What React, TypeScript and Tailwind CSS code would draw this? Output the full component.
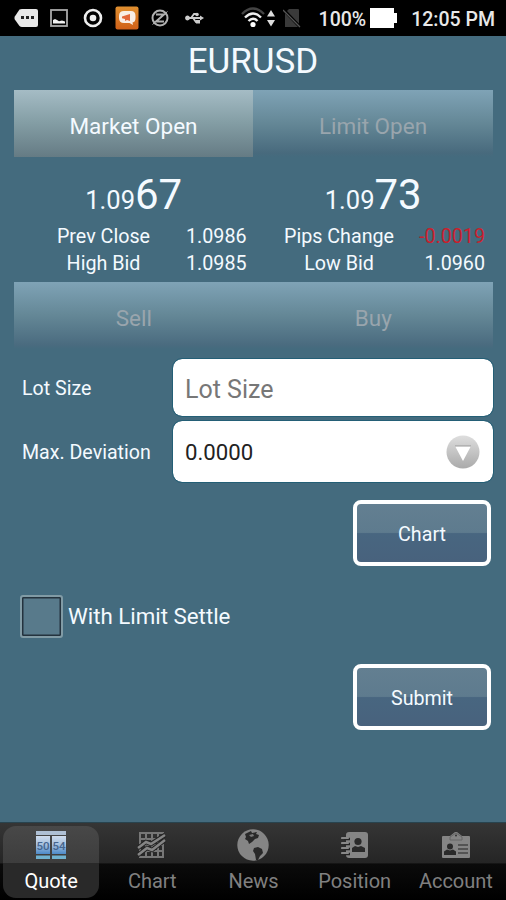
import React, { useState } from 'react';

interface Tab {
  name: string;
  icon: React.ReactNode;
}

const StatusBar: React.FC = () => (
  <div className="flex h-9 items-center bg-black pl-3.5 pr-[11px] text-[#e8e8e8]">
    <svg className="w-[25px] h-6 shrink-0" viewBox="0 0 25 24">
      <path d="M5.5 3.5Q6.500 3 8 3H22Q24 3 24 5V19Q24 21 22 21H8Q6.500 21 5.500 20L.8 13.500Q0 12 .8 10.500Z" fill="#e8e8e8" />
      <path d="M7 10h3v3H7zM12 10h3v3h-3zM17 10h3v3h-3z" fill="#222" />
    </svg>
    <svg className="ml-[11px] w-[18px] h-[18px] shrink-0" viewBox="0 0 18 18">
      <rect x="1" y="1" width="16" height="16" fill="#050505" stroke="#aaa" strokeWidth="1.8" />
      <path d="M3 14.500V11l2-1 2 1 2 1.200 3-.7 3 1V14.500z" fill="#f2f2f2" />
    </svg>
    <svg className="ml-[15px] w-5 h-5 shrink-0" viewBox="0 0 20 20">
      <circle cx="10" cy="10" r="8" fill="none" stroke="#eee" strokeWidth="2.6" />
      <circle cx="10" cy="10" r="3.300" fill="#eee" />
    </svg>
    <svg className="ml-3 w-6 h-6 shrink-0" viewBox="0 0 24 24">
      <defs>
        <linearGradient id="orange" x2="0" y2="1">
          <stop stopColor="#e09030" />
          <stop offset="1" stopColor="#d06018" />
        </linearGradient>
      </defs>
      <rect x=".5" y=".5" width="23" height="23" rx="2" fill="url(#orange)" />
      <path d="M9 5h7q4.500 0 4.500 5v2q0 4-3 4.500l.5 2.500-3.500-2H9q-5 0-5-5v-2q0-5 5-5z" fill="#f8eee6" />
      <path d="M7 10.500l8-2.500v7l-3-1-2 1v-2l-3-.7z" fill="#e2673a" />
    </svg>
    <svg className="ml-3 w-[18px] h-[18px] shrink-0" viewBox="0 0 18 18" fill="none" stroke="#b0b0b0">
      <circle cx="9" cy="9" r="7.500" strokeWidth="2" />
      <path d="M5 5.500h8L5 12.500h8" strokeWidth="2" />
      <path d="M1.500 15.500l15-13" strokeWidth="1" />
    </svg>
    <svg className="ml-4 w-[19px] h-3 shrink-0" viewBox="0 0 19 12" fill="none" stroke="#ccc" strokeWidth="1.800">
      <circle cx="2.500" cy="6" r="1.500" fill="#ccc" />
      <path d="M3 6h13M6 6l3-4h3M8 6l3 4h3" />
      <path d="M15 3.500L19 6l-4 2.500z" fill="#ccc" stroke="none" />
      <circle cx="12" cy="2.500" r="1.800" fill="#ccc" stroke="none" />
      <path d="M11 8h4v3.500h-4z" fill="#ccc" stroke="none" />
    </svg>
    <svg className="ml-[37px] w-9 h-[22px] shrink-0" viewBox="0 0 36 22" fill="none" strokeWidth="2.400">
      <path d="M1 7Q12-4 23 7" stroke="#444" />
      <path d="M4 10.500Q12 2.500 20 10.500" stroke="#eee" />
      <path d="M7.500 14Q12 9.500 16.500 14" stroke="#eee" />
      <circle cx="12" cy="17.500" r="2.600" fill="#fff" />
      <path d="M26 9.500l4-6.500 4 6.500zM26 13l4 6.500 4-6.500z" fill="#ddd" />
    </svg>
    <svg className="ml-1.5 w-[18px] h-5 shrink-0" viewBox="0 0 18 20">
      <path d="M6 1h9q1 0 1 1v17H2V5z" fill="#3a3a3a" />
      <path d="M0 1l17 18" stroke="#000" strokeWidth="3" />
      <path d="M0 2l17 17" stroke="#555" strokeWidth="1.300" />
    </svg>
    <span className="ml-auto text-[19.5px] font-medium leading-9 pt-[3px]">100%</span>
    <svg className="ml-1 w-7 h-5 shrink-0" viewBox="0 0 28 20">
      <path d="M0 0h24v5h3v10h-3v5H0z" fill="#fff" />
    </svg>
    <span className="ml-[13px] text-[19.5px] font-medium leading-9 pt-[3px]">12:05 PM</span>
  </div>
);

const Price: React.FC<{ small: string; big: string }> = ({ small, big }) => (
  <div className="text-center text-[25.5px] leading-[50px]">
    {small}
    <span className="text-[42px]">{big}</span>
  </div>
);

const ActionButton: React.FC<{ label: string }> = ({ label }) => (
  <button
    type="button"
    className="h-[66px] w-[138px] rounded-[8px] border-4 border-white bg-[linear-gradient(#637f91_0%,#5e7b8e_49%,#486680_51%,#48627d_100%)] pt-[3px] text-[19.7px]"
  >
    {label}
  </button>
);

const QuoteIcon = () => (
  <svg width="30" height="29" viewBox="0 0 30 29">
    <defs>
      <linearGradient id="cell" x2="0" y2="1">
        <stop stopColor="#d0dcec" />
        <stop offset=".5" stopColor="#a3bfdf" />
        <stop offset="1" stopColor="#4c8ac9" />
      </linearGradient>
    </defs>
    <rect width="30" height="4" fill="#afc0d4" />
    <path d="M0 5h14v18H0zM16 5h14v18H16z" fill="url(#cell)" />
    <path d="M0 24.500h14V28H0zM16 24.500h14V28H16z" fill="#70b2d0" />
    <g fill="#45658f" fontSize="11.500" fontWeight="500" fontFamily="Roboto, sans-serif" textAnchor="middle">
      <text x="7" y="19">50</text>
      <text x="23" y="19">54</text>
    </g>
  </svg>
);

const ChartIcon = () => (
  <svg width="30" height="26" viewBox="0 0 30 26" fill="none" stroke="#777">
    <path d="M3 1h23v24H3zM3 7h23M3 13h23M3 19h23M9 1v24M15 1v24M21 1v24" strokeWidth="2" />
    <path d="M1 16l8-6 5 2L28 3M1 23l9-7 5 2L28 8" stroke="#222" strokeWidth="4.500" />
    <path d="M1 16l8-6 5 2L28 3M1 23l9-7 5 2L28 8" stroke="#858585" strokeWidth="2.500" />
  </svg>
);

const NewsIcon = () => (
  <svg width="32" height="32" viewBox="0 0 32 32">
    <circle cx="16" cy="16" r="15.700" fill="#858585" />
    <path d="M8 5l6-3 1 2 5-1-1 2 3 1-1 3-3 1-3 3-3 2-1-3-3-2 1-2z" fill="#292929" />
    <path d="M12 6l4-1 1 2-3 1z" fill="#777" />
    <path d="M17 19l4-1 4 2 1 4-3 3-2 4h-2l-1-6-2-3z" fill="#292929" />
  </svg>
);

const PositionIcon = () => (
  <svg width="28" height="28" viewBox="0 0 28 28">
    <rect x="5" y="1" width="22" height="26" rx="3" fill="#858585" />
    <path d="M3 8h6M3 13h6M3 18h6M3 23h6" stroke="#252525" strokeWidth="2.500" />
    <path d="M1 7h6M1 12h6M1 17h6M1 22h6" stroke="#888" strokeWidth="2.200" strokeLinecap="round" />
    <circle cx="17" cy="10.500" r="3.600" fill="#2a2a2a" />
    <path d="M11 21v-4l3-2 3 1 3-1 4 2v4z" fill="#2a2a2a" />
  </svg>
);

const AccountIcon = () => (
  <svg width="30" height="28" viewBox="0 0 30 28">
    <path d="M9 5l5-4h2l5 4h7q1 0 1 1v20q0 1-1 1H2q-1 0-1-1V6q0-1 1-1z" fill="#858585" />
    <path d="M9 9V6l6-4 6 4v3z" fill="#858585" stroke="#666" />
    <circle cx="15" cy="4.500" r="1" fill="#333" />
    <circle cx="9" cy="15.500" r="3" fill="#2a2a2a" />
    <path d="M3 24v-3.500l3-2 3 1 3-1 3 2V24z" fill="#2a2a2a" />
    <path d="M17 14h10M17 18h10M17 22h10" stroke="#444" strokeWidth="1.400" />
  </svg>
);

const tabs: Tab[] = [
  { name: 'Quote', icon: <QuoteIcon /> },
  { name: 'Chart', icon: <ChartIcon /> },
  { name: 'News', icon: <NewsIcon /> },
  { name: 'Position', icon: <PositionIcon /> },
  { name: 'Account', icon: <AccountIcon /> },
];

const App: React.FC = () => {
  const [activeTab, setActiveTab] = useState('Quote');
  const [lotSize, setLotSize] = useState('');

  return (
    <div className="flex h-[900px] w-[506px] flex-col overflow-hidden bg-[#446b7e] font-['Roboto',sans-serif] text-[#f4faff]">
      <StatusBar />
      <h1 className="h-[54px] text-center text-[35px] leading-[52px]">EURUSD</h1>

      <main className="ml-3.5 w-[479px] flex-1">
        <div className="flex h-[67px] text-[22.5px]">
          <button type="button" className="w-[239px] pt-1.5 bg-[linear-gradient(#a5bcc5_0%,#849ea5_48%,#657b84_100%)]">
            Market Open
          </button>
          <button type="button" className="w-60 pt-1.5 bg-[linear-gradient(#7fa3b6_0%,#648796_50%,#486a7d_94%,#446b7e_100%)] text-[#99a5ad]">
            Limit Open
          </button>
        </div>

        <div className="mt-[13px] grid h-[52px] grid-cols-2">
          <Price small="1.09" big="67" />
          <Price small="1.09" big="73" />
        </div>

        <div className="grid h-[60px] grid-cols-[179px_46px_200px_46px] content-start pt-0.5 text-[19.7px] leading-[26.5px] whitespace-nowrap">
          <span className="text-center">Prev Close</span>
          <span className="-ml-[7px]">1.0986</span>
          <span className="text-center">Pips Change</span>
          <span className="flex justify-end text-[#c81f2d]">-0.0019</span>
          <span className="text-center">High Bid</span>
          <span className="-ml-[7px]">1.0985</span>
          <span className="text-center">Low Bid</span>
          <span className="flex justify-end">1.0960</span>
        </div>

        <div className="grid h-[67px] grid-cols-2 bg-[linear-gradient(#7fa3b6_0%,#648796_50%,#4a6b7f_94%,#446b7e_100%)] text-[22.5px] text-[#99a5ad]">
          <button type="button" className="pt-1.5">Sell</button>
          <button type="button" className="pt-1.5">Buy</button>
        </div>

        <div className="mt-2.5 flex h-[57px] items-center">
          <label htmlFor="lot" className="w-[159px] pt-[3px] pl-2 text-[19.6px]">Lot Size</label>
          <input
            id="lot"
            value={lotSize}
            onChange={(e) => setLotSize(e.target.value)}
            placeholder="Lot Size"
            className="h-full w-80 rounded-[9px] bg-white px-3 pt-1 text-[25px] text-black outline-1 outline-[#245f76] placeholder:text-[#777]"
          />
        </div>
        <div className="mt-[5px] flex h-[61px] items-center">
          <span className="w-[159px] pt-[3px] pl-2 text-[19.6px]">Max. Deviation</span>
          <div className="flex h-full w-80 items-center justify-between rounded-[9px] bg-white pl-3 pr-[13px] text-[22.2px] text-[#222] outline-1 outline-[#245f76]">
            <span className="pt-[3px]">0.0000</span>
            <svg width="34" height="34" viewBox="0 0 34 34">
              <defs>
                <linearGradient id="knob" x2="0" y2="1">
                  <stop stopColor="#dedede" />
                  <stop offset="1" stopColor="#aaa" />
                </linearGradient>
              </defs>
              <circle cx="17" cy="17" r="16.500" fill="url(#knob)" />
              <path d="M9 11h16l-8 15z" fill="#fff" />
              <path d="M9 11h16" stroke="#999" />
            </svg>
          </div>
        </div>

        <div className="mt-[18px] mr-0.5 flex justify-end">
          <ActionButton label="Chart" />
        </div>
        <label className="mt-[29px] ml-1.5 flex h-[43px] items-center gap-[5px] text-[22.3px]">
          <span className="h-[43px] w-[43px] rounded-[3px] border-2 border-[#819ba5] bg-[#587a8b] shadow-[inset_0_0_0_1.5px_#24333e]" />
          <span>With Limit Settle</span>
        </label>
        <div className="mt-[26px] mr-0.5 flex justify-end">
          <ActionButton label="Submit" />
        </div>
      </main>

      <nav className="grid h-[78px] grid-cols-5 border-t border-[#28434e] bg-[linear-gradient(#353535_0%,#252525_52%,#0b0b0b_53%,#000_100%)] pt-[3px] pb-0.5 text-[20px]">
        {tabs.map((tab) => (
          <button
            key={tab.name}
            type="button"
            onClick={() => setActiveTab(tab.name)}
            className={
              activeTab === tab.name
                ? 'mr-0.5 ml-[3px] rounded-[13px] bg-[linear-gradient(#484848_0%,#3d3d3d_51%,#292929_52%,#292929_100%)] text-white'
                : 'pl-px text-[#808080]'
            }
          >
            <span className="flex h-[38px] items-center justify-center">{tab.icon}</span>
            <span className="block h-[34px] leading-[35px]">{tab.name}</span>
          </button>
        ))}
      </nav>
    </div>
  );
};

export default App;
